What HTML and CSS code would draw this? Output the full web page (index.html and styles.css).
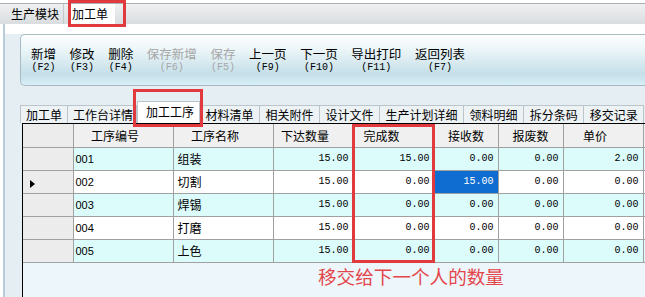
FILE: index.html
```html
<!DOCTYPE html>
<html lang="zh-CN">
<head>
  <meta charset="UTF-8">
  <title>加工单</title>
  <link rel="stylesheet" href="styles.css">
</head>
<body>
  <div class="topbar">
    <span class="ttab ttab-first">生产模块</span>
    <span class="ttab ttab-on">加工单</span>
  </div>

  <div class="main">
    <div class="toolbar">
      <div class="tool"><span>新增</span><span class="key">(F2)</span></div>
      <div class="tool"><span>修改</span><span class="key">(F3)</span></div>
      <div class="tool"><span>删除</span><span class="key">(F4)</span></div>
      <div class="tool off"><span>保存新增</span><span class="key">(F6)</span></div>
      <div class="tool off"><span>保存</span><span class="key">(F5)</span></div>
      <div class="tool"><span>上一页</span><span class="key">(F9)</span></div>
      <div class="tool"><span>下一页</span><span class="key">(F10)</span></div>
      <div class="tool"><span>导出打印</span><span class="key">(F11)</span></div>
      <div class="tool"><span>返回列表</span><span class="key">(F7)</span></div>
    </div>

    <div class="tabs">
      <span class="tab">加工单</span>
      <span class="tab tab-narrow">工作台详情</span>
      <span class="tab tab-on">加工工序</span>
      <span class="tab">材料清单</span>
      <span class="tab">相关附件</span>
      <span class="tab">设计文件</span>
      <span class="tab">生产计划详细</span>
      <span class="tab">领料明细</span>
      <span class="tab">拆分条码</span>
      <span class="tab">移交记录</span>
    </div>

    <div class="grid">
      <table>
        <colgroup>
          <col class="w-rh"><col class="w-100"><col class="w-100"><col class="w-80">
          <col class="w-81"><col class="w-64"><col class="w-65"><col class="w-80"><col class="w-10">
        </colgroup>
        <thead>
          <tr>
            <th class="rh"></th>
            <th class="h-l">工序编号</th>
            <th class="h-l">工序名称</th>
            <th class="h-l">下达数量</th>
            <th class="h-ll">完成数</th>
            <th>接收数</th>
            <th>报废数</th>
            <th class="h-l">单价</th>
            <th></th>
          </tr>
        </thead>
        <tbody>
          <tr class="alt">
            <td class="rh"></td><td class="code">001</td><td>组装</td>
            <td class="num">15.00</td><td class="num">15.00</td><td class="num">0.00</td><td class="num">0.00</td><td class="num">2.00</td><td></td>
          </tr>
          <tr>
            <td class="rh"><span class="arrow"></span></td><td class="code">002</td><td>切割</td>
            <td class="num">15.00</td><td class="num">0.00</td><td class="num sel">15.00</td><td class="num">0.00</td><td class="num">0.00</td><td></td>
          </tr>
          <tr class="alt">
            <td class="rh"></td><td class="code">003</td><td>焊锡</td>
            <td class="num">15.00</td><td class="num">0.00</td><td class="num">0.00</td><td class="num">0.00</td><td class="num">0.00</td><td></td>
          </tr>
          <tr>
            <td class="rh"></td><td class="code">004</td><td>打磨</td>
            <td class="num">15.00</td><td class="num">0.00</td><td class="num">0.00</td><td class="num">0.00</td><td class="num">0.00</td><td></td>
          </tr>
          <tr class="alt">
            <td class="rh"></td><td class="code">005</td><td>上色</td>
            <td class="num">15.00</td><td class="num">0.00</td><td class="num">0.00</td><td class="num">0.00</td><td class="num">0.00</td><td></td>
          </tr>
        </tbody>
      </table>
      <p class="note">移交给下一个人的数量</p>
    </div>
  </div>

  <!-- annotation boxes -->
  <div class="mark mark-top"></div>
  <div class="mark mark-tab"></div>
  <div class="mark mark-col"></div>
</body>
</html>
```

FILE: styles.css
```css
* { box-sizing: border-box; }
html, body { margin: 0; }
body { width: 645px; height: 297px; overflow: hidden; position: relative; background: #fff; font-family: "Noto Sans CJK SC", sans-serif; font-size: 12px; color: #000; }

/* top module tabs */
.topbar { display: flex; height: 21px; margin-top: 3px; border-top: 1px solid #a9b1b6; background: linear-gradient(#eef0f1, #dadde0); padding-left: 7px; }
.ttab { padding: 0 4px; line-height: 19px; }
.ttab-first { border-right: 1px solid #c3c8cc; }
.ttab-on { background: #fff; margin-left: 5px; padding: 0 7px 0 3px; }

.main { height: 273px; margin-left: 3px; border-left: 2px solid #b9ccd8; background: linear-gradient(#fff 10px, #e5eef3 10px); padding-top: 10px; display: flex; flex-direction: column; }

/* toolbar */
.toolbar { height: 52px; flex: none; margin-left: 15px; border: 1px solid #a8bac4; border-right: 0; border-radius: 5px 0 0 5px; background: linear-gradient(#fdfefe, #ebf5f8 30%, #c5dfe8 78%, #d8eff7); display: flex; align-items: center; gap: 13.6px; padding-left: 10px; }
.tool { display: flex; flex-direction: column; align-items: center; font-size: 12.5px; line-height: 13px; }
.key { font-family: "Liberation Mono", monospace; font-size: 10px; line-height: 11px; margin-top: 2px; }
.tool.off { color: #a6a6a6; }

/* page tabs */
.tabs { display: flex; align-items: flex-end; height: 23px; flex: none; margin: 14px 0 0 15px; }
.tab { height: 18px; padding: 0 5px; line-height: 17px; border: 1px solid #bcc5cb; border-bottom: 0; border-left: 0; background: #edf2f5; white-space: nowrap; }
.tab:first-child { border-left: 1px solid #bcc5cb; }
.tab-narrow { padding: 0 3px 0 5px; }
.tab-on { height: 22px; line-height: 20px; background: #fff; padding: 0 5px 0 8px; border-left: 1px solid #bcc5cb; }
.tab-on ~ .tab { padding: 0 5.5px; }

/* data grid */
.grid { flex: 1; margin-left: 17px; border-left: 1px solid #000; border-top: 1px solid #000; background: #edf6fb; overflow: hidden; }
table { border-collapse: collapse; table-layout: fixed; width: 630px; }
.w-rh { width: 50px; }
.w-100 { width: 100px; }
.w-80 { width: 80px; }
.w-81 { width: 81px; }
.w-64 { width: 64px; }
.w-65 { width: 65px; }
.w-10 { width: 10px; }
th, td { border: 1px solid #a0a0a0; height: 23px; padding: 0 4px; white-space: nowrap; overflow: hidden; background: #fff; }
th:first-child, td:first-child { border-left: 0; }
thead th { border-top: 0; background: #f0f0f0; font-weight: normal; text-align: center; }
th.h-l { padding-right: 20px; }
th.h-ll { padding-right: 28px; }
tr.alt td { background: #dcfcfc; }
tr td.rh, th.rh { background: #ececec; }
td.rh { padding-left: 7px; }
.arrow { display: inline-block; vertical-align: middle; border-left: 5px solid #000; border-top: 4px solid transparent; border-bottom: 4px solid transparent; }
.code { font-family: "Liberation Sans", sans-serif; font-size: 11px; padding-left: 2px; }
.num { text-align: right; font-family: "Liberation Mono", monospace; font-size: 10px; }
tr td.sel { background: #0f6cd0; color: #fff; }

.note { margin: 2px 0 0 295px; color: #e4464b; font-size: 18.6px; line-height: 22px; white-space: nowrap; }

/* red annotation boxes */
.mark { position: absolute; border: 3px solid #e0393e; }
.mark-top { left: 68px; top: 0; width: 58px; height: 27px; }
.mark-tab { left: 133px; top: 89px; width: 70px; height: 38px; }
.mark-col { left: 352px; top: 124px; width: 83px; height: 139px; }
```
